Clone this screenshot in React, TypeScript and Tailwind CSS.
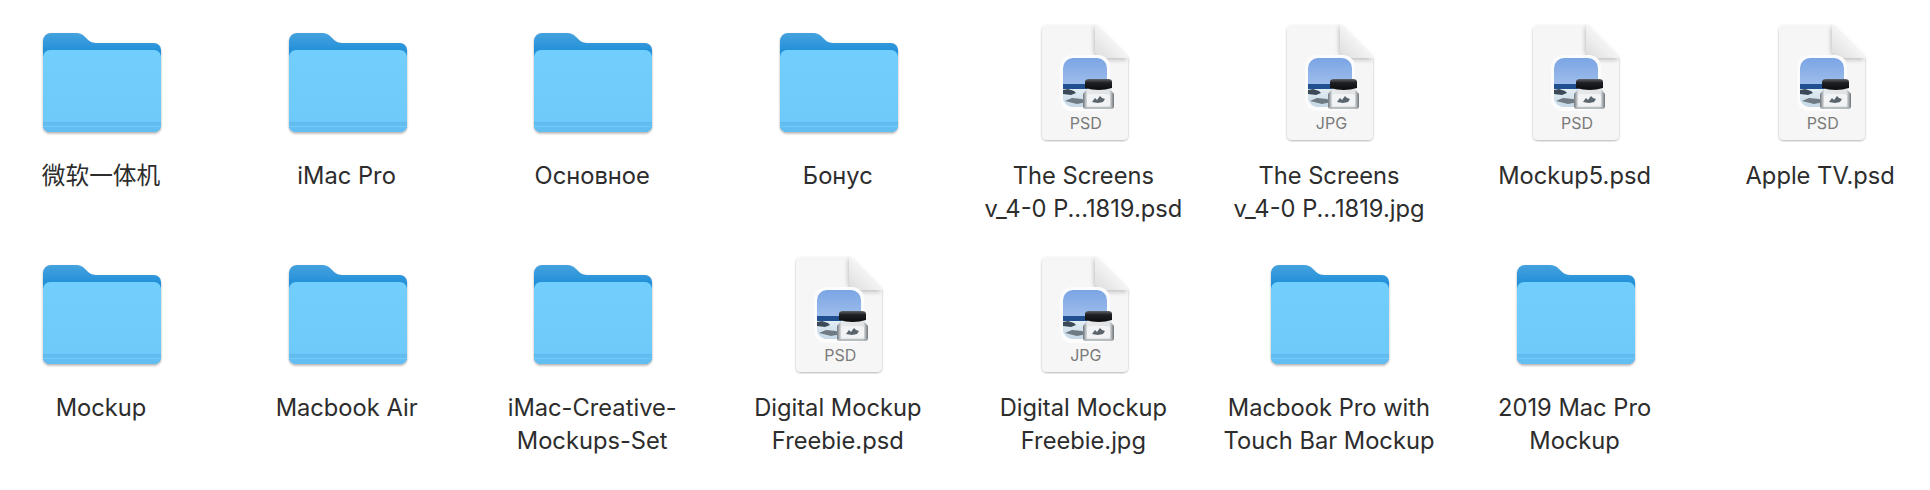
const FONT = "font-['Inter','Noto_Sans_CJK_SC',sans-serif]";

type Item = { kind: "folder" | "PSD" | "JPG"; lines: string[] };

const rows: Item[][] = [
  [
    { kind: "folder", lines: ["微软一体机"] },
    { kind: "folder", lines: ["iMac Pro"] },
    { kind: "folder", lines: ["Основное"] },
    { kind: "folder", lines: ["Бонус"] },
    { kind: "PSD", lines: ["The Screens", "v_4-0 P...1819.psd"] },
    { kind: "JPG", lines: ["The Screens", "v_4-0 P...1819.jpg"] },
    { kind: "PSD", lines: ["Mockup5.psd"] },
    { kind: "PSD", lines: ["Apple TV.psd"] },
  ],
  [
    { kind: "folder", lines: ["Mockup"] },
    { kind: "folder", lines: ["Macbook Air"] },
    { kind: "folder", lines: ["iMac-Creative-", "Mockups-Set"] },
    { kind: "PSD", lines: ["Digital Mockup", "Freebie.psd"] },
    { kind: "JPG", lines: ["Digital Mockup", "Freebie.jpg"] },
    { kind: "folder", lines: ["Macbook Pro with", "Touch Bar Mockup"] },
    { kind: "folder", lines: ["2019 Mac Pro", "Mockup"] },
  ],
];

const Folder = () => (
  <svg width="130" height="120" viewBox="0 -5 130 120">
    <defs>
      <linearGradient id="folderBack" x1="0" y1="0" x2="0" y2="1">
        <stop offset="0" stopColor="#45a2de" />
        <stop offset="1" stopColor="#0f85d5" />
      </linearGradient>
      <linearGradient id="folderFront" x1="0" y1="0" x2="0" y2="1">
        <stop offset="0" stopColor="#72cefc" />
        <stop offset="1" stopColor="#6cc9f9" />
      </linearGradient>
      <filter id="folderShadow" x="-10%" y="-10%" width="120%" height="125%">
        <feDropShadow dx="0" dy="1.5" stdDeviation="1.2" floodColor="#000" floodOpacity="0.32" />
      </filter>
    </defs>
    <g filter="url(#folderShadow)">
      <path
        d="M6 14a8 8 0 0 1 8-8h25c4 0 6 1 9 4 3 3 6 6 11 6h58a7 7 0 0 1 7 7v12H6z"
        fill="url(#folderBack)"
      />
      <rect x="6" y="30" width="118" height="75" rx="7" fill="#1186d6" />
      <rect x="6" y="23" width="118" height="82" rx="7" fill="url(#folderFront)" />
    </g>
    <path d="M6 95h118v3a7 7 0 0 1-7 7H13a7 7 0 0 1-7-7z" fill="#62bdf1" />
    <rect x="6" y="95" width="118" height="1" fill="#5fb9ec" />
    <rect x="6" y="99" width="118" height="1" fill="#7dd1fa" opacity="0.7" />
  </svg>
);

// doc page with the Preview app badge: photo tile and ink bottle
const Doc = ({ ext }: { ext: string }) => (
  <div className="relative h-[120px] w-[130px]">
    <svg width="130" height="120" viewBox="0 0 130 120" className="absolute inset-0">
      <defs>
        <linearGradient id="docSky" x1="0" y1="0" x2="0" y2="1">
          <stop offset="0" stopColor="#7aa5e4" />
          <stop offset="1" stopColor="#bcd2f2" />
        </linearGradient>
        <linearGradient id="docSea" x1="0" y1="0" x2="0" y2="1">
          <stop offset="0" stopColor="#e3edf4" />
          <stop offset="1" stopColor="#c5d8e6" />
        </linearGradient>
        <linearGradient id="docCurl" x1="0" y1="1" x2="1" y2="0">
          <stop offset="0" stopColor="#dcdcdc" />
          <stop offset="0.5" stopColor="#f3f3f3" />
          <stop offset="1" stopColor="#ffffff" />
        </linearGradient>
        <linearGradient id="inkGlass" x1="0" y1="0" x2="1" y2="0">
          <stop offset="0" stopColor="#70767b" />
          <stop offset="0.14" stopColor="#e6e9eb" />
          <stop offset="0.86" stopColor="#dfe3e6" />
          <stop offset="1" stopColor="#6c7277" />
        </linearGradient>
        <linearGradient id="inkCap" x1="0" y1="0" x2="0" y2="1">
          <stop offset="0" stopColor="#5d6165" />
          <stop offset="0.35" stopColor="#1d1f22" />
          <stop offset="1" stopColor="#0c0d0e" />
        </linearGradient>
        <filter id="docShadow" x="-10%" y="-10%" width="120%" height="120%">
          <feDropShadow dx="0" dy="1" stdDeviation="1" floodColor="#000" floodOpacity="0.3" />
        </filter>
        <filter id="curlShadow" x="-30%" y="-30%" width="160%" height="160%">
          <feDropShadow dx="-1" dy="2" stdDeviation="2" floodColor="#000" floodOpacity="0.22" />
        </filter>
        <clipPath id="tileClip">
          <rect x="41" y="36" width="44" height="49" rx="10" />
        </clipPath>
      </defs>
      <path
        d="M20 8a5 5 0 0 1 5-5h48l33 33v77a5 5 0 0 1-5 5H25a5 5 0 0 1-5-5z"
        fill="#f6f6f6"
        filter="url(#docShadow)"
      />
      <path
        d="M73 3c2 0 3 .5 5 2.500l25 25c2 2 3 3.500 3 5.500H83c-6 0-10-4-10-10z"
        fill="url(#docCurl)"
        filter="url(#curlShadow)"
      />
      <rect x="38" y="33" width="50" height="56" rx="12" fill="#fcfcfc" />
      <g clipPath="url(#tileClip)">
        <rect x="41" y="36" width="44" height="49" fill="url(#docSky)" />
        <rect x="41" y="62" width="44" height="5" fill="#20508f" />
        <rect x="41" y="67" width="44" height="18" fill="url(#docSea)" />
        <path d="M41 68l5-1 6 2 2 2-5 2-8-1z" fill="#3c4a58" />
        <path d="M43 79l7-3 10 1 5 3-10 2z" fill="#6f7a82" />
      </g>
      {/* ink bottle */}
      <path d="M66 66h21l5 6v12c0 2-1 3-3 3H64c-2 0-3-1-3-3V72z" fill="url(#inkGlass)" />
      <path d="M63 60q0-3 4-3h19q4 0 4 3v6q-13 4-27 0z" fill="url(#inkCap)" />
      <path d="M67 72h19l2 2v8c0 1-1 2-2 2H67c-1 0-2-1-2-2v-8z" fill="#f1f3f5" />
      <path d="M70 80l3-4 2 2 3-4 2 2 3 1-2 3-5 1z" fill="#59646d" />
      <path d="M64 86h25" stroke="#8f9599" strokeWidth="1" />
    </svg>
    <span className={`absolute left-0 top-[90px] w-[128px] text-center text-[16px] leading-[22px] text-[#7a7a7a] ${FONT}`}>
      {ext}
    </span>
  </div>
);

const Tile = ({ item }: { item: Item }) => (
  <div className="flex w-[200px] flex-col items-center">
    <div className={item.kind === "folder" ? "h-[120px]" : "ml-[5px] h-[120px]"}>
      {item.kind === "folder" ? <Folder /> : <Doc ext={item.kind} />}
    </div>
    <div className={`-ml-[2px] mt-[17px] flex flex-col items-center text-[23.7px] leading-[33px] text-[#2d2d2d] ${FONT}`}>
      {item.lines.map((l) => (
        <span key={l} className="whitespace-nowrap">
          {l}
        </span>
      ))}
    </div>
  </div>
);

const App = () => {
  return (
    <div className="h-[490px] w-[1930px] overflow-hidden bg-white pl-[2px] pt-[22px]">
      {rows.map((row, i) => (
        <div key={i} className="flex h-[232px] gap-[45.6px]">
          {row.map((item, j) => (
            <Tile key={j} item={item} />
          ))}
        </div>
      ))}
    </div>
  );
};

export default App;
